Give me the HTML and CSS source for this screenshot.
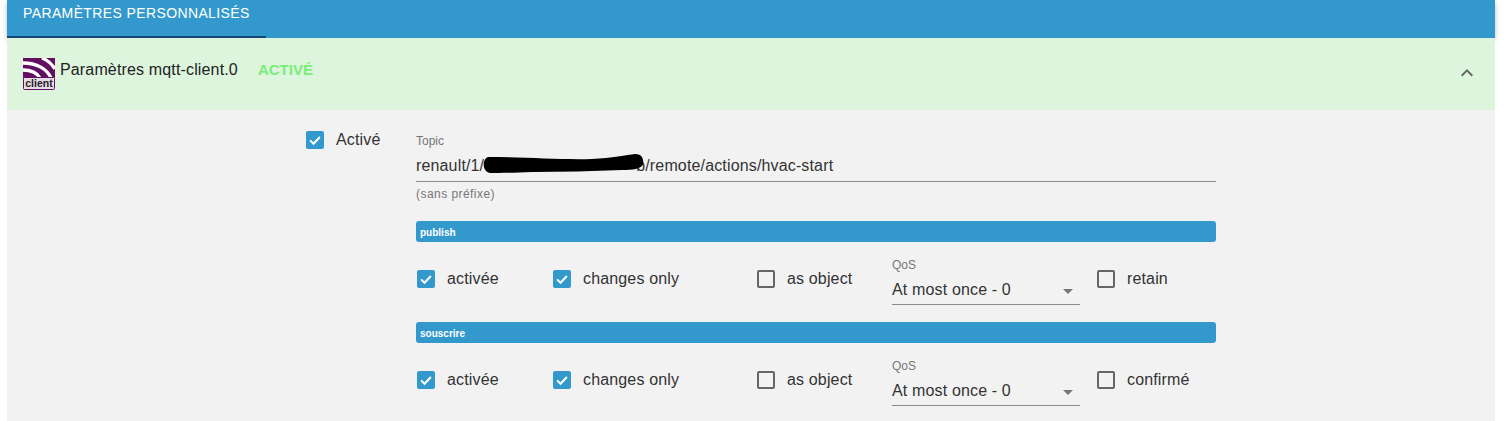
FILE: index.html
```html
<!DOCTYPE html>
<html lang="fr">
<head>
  <meta charset="UTF-8">
  <title>Paramètres mqtt-client.0</title>
  <link rel="stylesheet" href="styles.css">
</head>
<body>
  <div class="panel">
    <div class="tabs">
      <div class="tab">PARAMÈTRES PERSONNALISÉS</div>
    </div>

    <div class="head">
      <svg class="logo" viewBox="0 0 32 32">
        <rect width="32" height="32" rx="1" fill="#fff"/>
        <path d="M0 0H32V20H0Z" fill="#620f62"/>
        <path d="M0 5C14 5 24 11 28 20M0 12C8 12 14 15 17 20M19 0C24 2 29 6 32 11" fill="none" stroke="#fff" stroke-width="3.4"/>
        <rect x="0.5" y="19.5" width="31" height="12" rx="1" fill="#e4dde4" stroke="#620f62"/>
        <text x="16" y="29" class="logo-text">client</text>
      </svg>
      <span class="head-title">Paramètres mqtt-client.0</span>
      <span class="head-state">ACTIVÉ</span>
      <svg class="chevron" viewBox="0 0 24 24"><path d="M7.41 15.41 12 10.83l4.59 4.58L18 14l-6-6-6 6z"/></svg>
    </div>

    <div class="content">
      <label class="check on main-check"><i class="box"><svg viewBox="0 0 24 24"><path d="M5.5 12.5 10 17l8.5-9"/></svg></i><span>Activé</span></label>

      <div class="form">
        <div class="topic">
          <div class="small-label">Topic</div>
          <div class="topic-value"><span>renault/1/</span><span class="hidden-part"></span><span>b/remote/actions/hvac-start</span>
            <svg class="scribble" viewBox="0 0 162 20"><path d="M6 3C40 3 80 6 110 5C130 4 145 1 153 0C160 0 162 5 161 10C160 15 150 16 140 16C110 17 80 18 50 18C30 19 15 19 8 19C0 18 0 5 6 3Z"/></svg>
          </div>
          <div class="small-label hint">(sans préfixe)</div>
        </div>

        <div class="bar">publish</div>
        <div class="row">
          <label class="check on col-a"><i class="box"><svg viewBox="0 0 24 24"><path d="M5.5 12.5 10 17l8.5-9"/></svg></i><span>activée</span></label>
          <label class="check on col-b"><i class="box"><svg viewBox="0 0 24 24"><path d="M5.5 12.5 10 17l8.5-9"/></svg></i><span>changes only</span></label>
          <label class="check col-c"><i class="box"></i><span>as object</span></label>
          <div class="select">
            <div class="small-label">QoS</div>
            <div class="select-value">At most once - 0<b class="caret"></b></div>
          </div>
          <label class="check col-d"><i class="box"></i><span>retain</span></label>
        </div>

        <div class="bar">souscrire</div>
        <div class="row">
          <label class="check on col-a"><i class="box"><svg viewBox="0 0 24 24"><path d="M5.5 12.5 10 17l8.5-9"/></svg></i><span>activée</span></label>
          <label class="check on col-b"><i class="box"><svg viewBox="0 0 24 24"><path d="M5.5 12.5 10 17l8.5-9"/></svg></i><span>changes only</span></label>
          <label class="check col-c"><i class="box"></i><span>as object</span></label>
          <div class="select">
            <div class="small-label">QoS</div>
            <div class="select-value">At most once - 0<b class="caret"></b></div>
          </div>
          <label class="check col-d"><i class="box"></i><span>confirmé</span></label>
        </div>
      </div>
    </div>
  </div>
</body>
</html>
```

FILE: styles.css
```css
* {
  box-sizing: border-box;
}

html,
body {
  height: 421px;
  overflow: hidden;
}

body {
  margin: 0;
  padding: 0 9px 0 7px;
  background: #fff;
  color: #333;
  font-family: "Liberation Sans", Arial, sans-serif;
  font-size: 16px;
  letter-spacing: 0.15px;
}

.panel {
  display: flex;
  flex-direction: column;
  height: 421px;
}

.tabs {
  height: 38px;
  background: #3399cc;
  box-shadow: 0 2px 5px rgba(0, 0, 0, 0.25);
  flex: none;
}

.tab {
  width: 259px;
  height: 38px;
  padding: 5px 0 0 16px;
  color: #fff;
  font-size: 14px;
  line-height: 16px;
  letter-spacing: 0.38px;
  border-bottom: 2px solid #164477;
}

.head {
  position: relative;
  display: flex;
  align-items: flex-start;
  height: 72px;
  padding: 20px 16px 0 16px;
  background: #ddf5dd;
  flex: none;
}

.logo {
  width: 32px;
  height: 32px;
  flex: none;
}

.logo-text {
  font-family: "Liberation Sans", Arial, sans-serif;
  font-size: 10.5px;
  font-weight: bold;
  letter-spacing: 0;
  fill: #2a1a2a;
  text-anchor: middle;
}

.head-title {
  margin-left: 5px;
  padding-top: 1px;
  line-height: 22px;
  color: #222;
}

.head-state {
  margin-left: 20px;
  padding-top: 1px;
  line-height: 22px;
  font-size: 15px;
  font-weight: bold;
  letter-spacing: 0;
  color: #77ee77;
}

.chevron {
  width: 24px;
  height: 24px;
  margin: 3px 0 0 auto;
  fill: #666;
}

.content {
  display: flex;
  flex: 1;
  align-items: flex-start;
  background: #f2f2f2;
}

.check {
  display: flex;
  align-items: center;
  line-height: 18px;
}

.box {
  width: 18px;
  height: 18px;
  margin-right: 12px;
  flex: none;
  border: 2px solid #666;
  border-radius: 2px;
}

.on .box {
  border: 0;
  background: #3399cc;
}

.box svg {
  display: block;
  width: 18px;
  height: 18px;
  fill: none;
  stroke: #fff;
  stroke-width: 2.6;
}

.main-check {
  margin: 20px 0 0 299px;
  width: 110px;
}

.main-check span {
  padding-top: 1px;
}

.form {
  width: 800px;
  padding-top: 24px;
}

.small-label {
  font-size: 12px;
  line-height: 14px;
  letter-spacing: 0;
  color: #777;
}

.topic {
  height: 87px;
}

.topic-value {
  position: relative;
  display: flex;
  height: 34px;
  padding-top: 7px;
  line-height: 22px;
  border-bottom: 1px solid #8a8a8a;
}

.hidden-part {
  width: 152px;
}

.scribble {
  position: absolute;
  left: 66px;
  top: 6px;
  width: 162px;
  height: 20px;
  fill: #000;
}

.hint {
  margin-top: 5px;
  letter-spacing: 0.45px;
}

.bar {
  height: 21px;
  padding-left: 4px;
  background: #3399cc;
  border-radius: 3px;
  color: #fff;
  font-size: 10px;
  font-weight: bold;
  line-height: 23px;
  letter-spacing: 0;
}

.row {
  display: flex;
  align-items: flex-start;
  height: 80px;
  padding-top: 28px;
}

.col-a {
  margin-left: 1px;
  width: 136px;
}

.col-b {
  width: 204px;
}

.col-c {
  width: 135px;
}

.select {
  width: 188px;
  margin-top: -12px;
  flex: none;
}

.select-value {
  position: relative;
  height: 33px;
  padding-top: 8px;
  line-height: 20px;
  border-bottom: 1px solid #8a8a8a;
}

.caret {
  position: absolute;
  right: 7px;
  top: 17px;
  border-style: solid;
  border-width: 5px 5px 0 5px;
  border-color: #777 transparent transparent transparent;
}

.col-d {
  margin-left: 17px;
}
```
